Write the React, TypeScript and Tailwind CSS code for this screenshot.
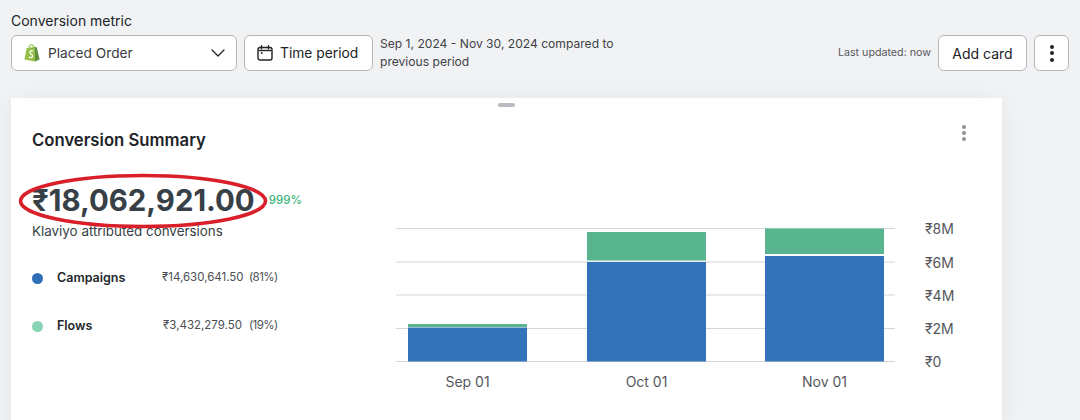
import { ChevronDown } from 'lucide-react'

const BARS = [
  { label: 'Sep 01', x: 408, green: 324, greenEnd: 327, blue: 327.5 },
  { label: 'Oct 01', x: 587, green: 232, greenEnd: 260.5, blue: 262 },
  { label: 'Nov 01', x: 765, green: 228.5, greenEnd: 254, blue: 256 },
]

const TICKS = [
  { label: '₹8M', y: 228.5 },
  { label: '₹6M', y: 262 },
  { label: '₹4M', y: 295 },
  { label: '₹2M', y: 328.5 },
  { label: '₹0', y: 361.5 },
]

const OFFSET_X = 396
const OFFSET_Y = 210

function ShopifyBag() {
  return (
    <svg width="16" height="18" viewBox="0 0 16 18" className="shrink-0">
      <path d="M5 4.5C5 2 6.2 0.8 7.4 0.8C9 0.8 9.8 2.4 10 4" fill="none" stroke="#95bf47" strokeWidth="1.1" />
      <path d="M11 2.8L2.6 4.2L0.5 15.4L11 17.6Z" fill="#95bf47" />
      <path d="M11 2.8L12.8 3.4L15.6 15.6L11 17.6Z" fill="#5e8e3e" />
      <path
        d="M9 7.2C7.6 6.3 5.6 6.9 5.8 8.5C6 10 8.7 10 8.6 12C8.5 13.9 6.2 13.9 4.8 13"
        fill="none"
        stroke="#fff"
        strokeWidth="1.3"
      />
    </svg>
  )
}

function CalendarIcon() {
  return (
    <svg width="16" height="16" viewBox="0 0 16 16" fill="none" stroke="#202327" strokeWidth="1.4">
      <rect x="1" y="2.5" width="14" height="12.5" rx="2" />
      <path d="M4.5 0.8v3M11.5 0.8v3" strokeLinecap="round" />
      <path d="M1.5 5.5h13" />
      <circle cx="4.8" cy="8" r="0.9" fill="#202327" stroke="none" />
    </svg>
  )
}

function Chart() {
  return (
    <svg width="590" height="190" viewBox="0 0 590 190" className="shrink-0">
      {TICKS.map((t) => (
        <g key={t.label}>
          <line x1="0" x2="499" y1={t.y - OFFSET_Y} y2={t.y - OFFSET_Y} stroke="#d3d5da" strokeWidth="1" />
          <text x="529" y={t.y - OFFSET_Y + 5.5} fontSize="14" fill="#56585c" fontFamily="Inter, sans-serif">
            {t.label}
          </text>
        </g>
      ))}
      {BARS.map((b) => (
        <g key={b.label}>
          <rect x={b.x - OFFSET_X} y={b.green - OFFSET_Y} width="119" height={b.greenEnd - b.green} fill="#59b58f" />
          <rect x={b.x - OFFSET_X} y={b.blue - OFFSET_Y} width="119" height={361.5 - b.blue} fill="#3373b9" />
          <text
            x={b.x - OFFSET_X + 59.5}
            y="177"
            textAnchor="middle"
            fontSize="14"
            fill="#56585c"
            fontFamily="Inter, sans-serif"
          >
            {b.label}
          </text>
        </g>
      ))}
    </svg>
  )
}

function LegendRow({ color, name, amount, pct }: { color: string; name: string; amount: string; pct: string }) {
  return (
    <div className="flex h-[22px] items-center">
      <span className={`h-[11px] w-[11px] rounded-full ${color}`} />
      <span className="ml-[14px] w-[105px] text-[12.5px] font-semibold text-[#24272b]">{name}</span>
      <span className="w-[80px] text-right text-[11.5px] text-[#4b4f55]">{amount}</span>
      <span className="ml-[7px] text-[11.5px] tracking-tighter text-[#4b4f55]">{pct}</span>
    </div>
  )
}

export default function App() {
  return (
    <div className="h-[420px] w-[1080px] overflow-hidden bg-[#f1f2f4] pl-[11px] pt-[13px] font-['Inter',sans-serif] text-[#202327]">
      <p className="text-[14px] leading-[16px]">Conversion metric</p>
      <div className="mt-[6px] flex items-center pr-[11px]">
        <button className="flex h-[36px] w-[226px] items-center rounded-[6px] border border-[#b4b6ba] bg-white pl-[12px] pr-[6px] text-[13.7px] text-[#3a3d42]">
          <ShopifyBag />
          <span className="ml-[8px] flex-1 text-left">Placed Order</span>
          <ChevronDown size={24} strokeWidth={1.3} className="text-[#202327]" />
        </button>
        <button className="ml-[7px] flex h-[36px] w-[129px] items-center gap-[7px] rounded-[6px] border border-[#b4b6ba] bg-white pl-[12px] text-[13.8px]">
          <CalendarIcon />
          Time period
        </button>
        <p className="ml-[7px] w-[250px] text-[12.1px] leading-[18px] text-[#3f4247]">
          Sep 1, 2024 - Nov 30, 2024 compared to previous period
        </p>
        <span className="ml-auto text-[10.7px] text-[#56585c]">Last updated: now</span>
        <button className="ml-[7px] h-[36px] w-[89px] rounded-[6px] border border-[#b4b6ba] bg-white text-[14px]">
          Add card
        </button>
        <button className="ml-[7px] flex h-[36px] w-[35px] flex-col items-center justify-center gap-[2.5px] rounded-[6px] border border-[#b4b6ba] bg-white">
          <span className="h-[4px] w-[4px] rounded-full bg-[#202327]" />
          <span className="h-[4px] w-[4px] rounded-full bg-[#202327]" />
          <span className="h-[4px] w-[4px] rounded-full bg-[#202327]" />
        </button>
      </div>

      <div className="relative mt-[27px] h-[330px] w-[991px] bg-white pl-[21px] shadow-[0_4px_24px_rgba(0,0,0,0.06)]">
        <span className="absolute left-[487px] top-[5px] h-[4px] w-[17px] rounded-full bg-[#b9bcc1]" />
        <div className="absolute right-[36px] top-[27px] flex flex-col gap-[2px]">
          <span className="h-[4px] w-[4px] rounded-full bg-[#8f9298]" />
          <span className="h-[4px] w-[4px] rounded-full bg-[#8f9298]" />
          <span className="h-[4px] w-[4px] rounded-full bg-[#8f9298]" />
        </div>

        <h2 className="pt-[30px] text-[16.7px] font-semibold leading-[24px] text-[#202327]">Conversion Summary</h2>

        <div className="flex">
          <div className="w-[364px] shrink-0">
            <div className="relative mt-[30px] flex items-center">
              <span className="text-[29.4px] font-bold leading-[38px] text-[#373f47]">₹18,062,921.00</span>
              <span className="ml-[14px] text-[11.5px] font-medium text-[#3bb57a]">999%</span>
              <svg width="252" height="60" viewBox="0 0 252 60" className="absolute left-[-15px] top-[-10px]">
                <ellipse cx="126" cy="29" rx="122.5" ry="25.5" fill="none" stroke="#d9202a" strokeWidth="3.6" />
              </svg>
            </div>
            <p className="mt-[2px] text-[13.4px] leading-[18px] text-[#373f47]">Klaviyo attributed conversions</p>
            <div className="mt-[27px] flex flex-col gap-[26px]">
              <LegendRow color="bg-[#2f6fb8]" name="Campaigns" amount="₹14,630,641.50" pct="(81%)" />
              <LegendRow color="bg-[#88d4b4]" name="Flows" amount="₹3,432,279.50" pct="(19%)" />
            </div>
          </div>
          <div className="mt-[58px]">
            <Chart />
          </div>
        </div>
      </div>
    </div>
  )
}
